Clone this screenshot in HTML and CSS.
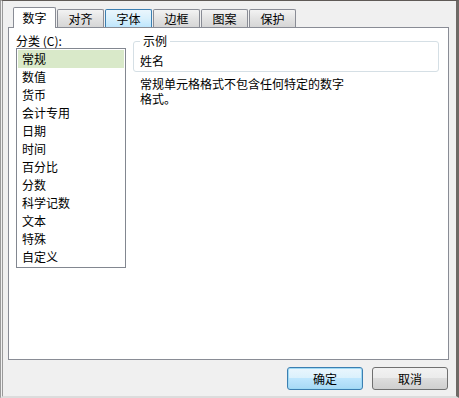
FILE: index.html
```html
<!DOCTYPE html>
<html lang="zh-CN">
<head>
    <meta charset="UTF-8">
    <title>设置单元格格式</title>
    <link rel="stylesheet" href="styles.css">
</head>
<body>
    <div class="dialog">
        <div class="tabs">
            <div class="tab active">数字</div>
            <div class="tab">对齐</div>
            <div class="tab hover">字体</div>
            <div class="tab">边框</div>
            <div class="tab">图案</div>
            <div class="tab">保护</div>
        </div>
        <div class="panel">
            <div class="category">
                <div class="label">分类 (C):</div>
                <ul class="listbox">
                    <li class="selected">常规</li>
                    <li>数值</li>
                    <li>货币</li>
                    <li>会计专用</li>
                    <li>日期</li>
                    <li>时间</li>
                    <li>百分比</li>
                    <li>分数</li>
                    <li>科学记数</li>
                    <li>文本</li>
                    <li>特殊</li>
                    <li>自定义</li>
                </ul>
            </div>
            <div class="detail">
                <fieldset class="sample">
                    <legend>示例</legend>
                    <div class="sample-value">姓名</div>
                </fieldset>
                <p class="desc">常规单元格格式不包含任何特定的数字格式。</p>
            </div>
        </div>
        <div class="footer">
            <button class="btn default">确定</button>
            <button class="btn">取消</button>
        </div>
    </div>
</body>
</html>
```

FILE: styles.css
```css
body {
    margin: 0;
    font-family: "Noto Sans CJK SC", "DejaVu Sans", sans-serif;
    font-size: 12px;
    color: #000;
    background: #f0f0f0;
}
.dialog {
    width: 459px;
    height: 398px;
    box-sizing: border-box;
    background: #f0f0f0;
    border-top: 1px solid #5f5a56;
    border-right: 3px solid #6e6a66;
    border-left: 3px double #9a9a9a;
    border-bottom: 2px solid #dcdcdc;
    padding: 6px 7px 0 5px;
}
.tabs {
    display: flex;
    align-items: flex-end;
    height: 20px;
    padding-left: 5px;
    gap: 1px;
}
.tab {
    width: 47px;
    height: 18px;
    box-sizing: border-box;
    border: 1px solid #898c95;
    border-bottom: none;
    border-radius: 2px 2px 0 0;
    background: linear-gradient(#f3f3f3, #e3e3e3 50%, #d6d6d6);
    text-align: center;
    line-height: 17px;
}
.tab.active {
    width: 43px;
    height: 21px;
    margin-bottom: -1px;
    background: #fff;
    line-height: 20px;
    position: relative;
    z-index: 1;
}
.tab.hover {
    border-color: #3c7fb1;
    background: linear-gradient(#eaf6fd, #d9f0fc 50%, #bee6fd);
}
.panel {
    height: 333px;
    box-sizing: border-box;
    background: #fff;
    border: 1px solid #898c95;
    display: flex;
    gap: 7px;
    padding: 6px 0 0 7px;
}
.label {
    line-height: 14px;
}
.listbox {
    list-style: none;
    margin: 0;
    padding: 1px;
    width: 110px;
    height: 220px;
    box-sizing: border-box;
    border: 1px solid #828790;
}
.listbox li {
    height: 18px;
    line-height: 18px;
    padding-left: 4px;
}
.listbox li.selected {
    background: #d9e9c9;
}
.detail {
    width: 306px;
}
.sample {
    margin: 0;
    padding: 6px 6px 3px;
    border: 1px solid #d5dfe5;
    border-radius: 3px;
}
.sample legend {
    padding: 0 3px;
    line-height: 14px;
}
.sample-value {
    line-height: 14px;
}
.desc {
    margin: 4px 0 0 7px;
    width: 210px;
    line-height: 15px;
}
.footer {
    display: flex;
    justify-content: flex-end;
    gap: 9px;
    padding-top: 7px;
    padding-right: 1px;
}
.btn {
    width: 76px;
    height: 23px;
    border: 1px solid #707070;
    border-radius: 3px;
    background: linear-gradient(#f2f2f2, #ebebeb 50%, #dddddd 50%, #cfcfcf);
    font-family: inherit;
    font-size: 12px;
    color: #000;
    padding: 0;
}
.btn.default {
    border-color: #3c7fb1;
    background: linear-gradient(#eaf6fd, #d9f0fc 50%, #bee6fd 50%, #a7d9f5);
    box-shadow: inset 0 0 0 1px #9fdaf5;
}
```
